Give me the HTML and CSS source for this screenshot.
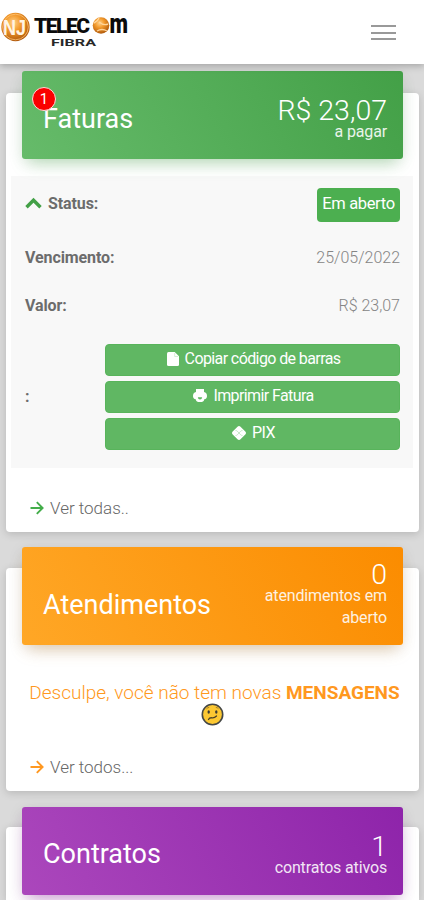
FILE: index.html
```html
<!DOCTYPE html>
<html lang="pt-BR">
<head>
<meta charset="utf-8">
<meta name="viewport" content="width=device-width, initial-scale=1">
<title>NJ Telecom Fibra</title>
<link rel="stylesheet" href="styles.css">
</head>
<body>
<header class="topbar">
  <svg class="logo" width="130" height="50" viewBox="0 0 130 50" role="img" aria-label="NJ Telecom Fibra">
    <defs>
      <radialGradient id="orb" cx=".42" cy=".35" r=".7">
        <stop offset="0" stop-color="#ffd08a"/>
        <stop offset=".4" stop-color="#f39a2c"/>
        <stop offset="1" stop-color="#a95208"/>
      </radialGradient>
    </defs>
    <circle cx="15.500" cy="27" r="14.200" fill="url(#orb)"/>
    <circle cx="15.500" cy="27" r="12.800" fill="none" stroke="#ffc477" stroke-width=".8"/>
    <text class="logo-mono" x="3" y="35" textLength="23" lengthAdjust="spacingAndGlyphs">NJ</text>
    <text class="logo-word" x="34" y="33" textLength="56" lengthAdjust="spacing">TELEC</text>
    <circle cx="101" cy="25.500" r="8.300" fill="url(#orb)"/>
    <path d="M94 23q4-2 5-5M99 22q5 4 9 2M97 31q5-3 10 0" fill="none" stroke="#ffd59b" stroke-width="1.400"/>
    <text class="logo-word logo-m" x="109.500" y="33" textLength="18.500" lengthAdjust="spacingAndGlyphs">m</text>
    <text class="logo-sub" x="51" y="46" textLength="45" lengthAdjust="spacingAndGlyphs">FIBRA</text>
  </svg>
  <button class="menu" aria-label="Menu"><span></span><span></span><span></span></button>
</header>
<main class="content">
  <section class="card invoices">
    <div class="banner green">
      <span class="badge">1</span>
      <h2 class="title">Faturas</h2>
      <div class="summary"><span class="figure">R$ 23,07</span><span class="caption">a pagar</span></div>
    </div>
    <div class="details">
      <div class="row status">
        <span class="label"><svg class="chevron" width="17" height="12" viewBox="0 0 17 12"><path d="M1.500 10.200l7-7 7 7" fill="none" stroke="#43a047" stroke-width="3.400"/></svg>Status:</span>
        <span class="tag">Em aberto</span>
      </div>
      <div class="row"><span class="label">Vencimento:</span><span class="value">25/05/2022</span></div>
      <div class="row"><span class="label">Valor:</span><span class="value">R$ 23,07</span></div>
      <div class="row actions">
        <span class="label">:</span>
        <div class="buttons">
          <button class="btn"><svg width="12" height="14" viewBox="0 0 12 14"><path d="M1.500 0h6.200L12 4.300v8.200q0 1.500-1.500 1.500h-9Q0 14 0 12.500v-11Q0 0 1.500 0z" fill="#fff"/><path d="M7.700 1v3.500h3.300" fill="none" stroke="#cbe8cc" stroke-width=".8"/></svg><span>Copiar código de barras</span></button>
          <button class="btn"><svg width="14" height="13" viewBox="0 0 14 13"><path d="M3 0h8v3q3 .5 3 4 0 3-2.700 3.300-.3 2.700-2.300 2.700H5q-2 0-2.300-2.700Q0 10 0 7q0-3.500 3-4z" fill="#fff"/><path d="M4.800 8.200h4.400q-.3 2.200-2.200 2.200T4.800 8.200z" fill="#5fb762"/></svg><span>Imprimir Fatura</span></button>
          <button class="btn"><svg width="14" height="14" viewBox="0 0 14 14"><path d="M7 0q.8 0 1.500.700l4.800 4.800q1.400 1.500 0 3L8.500 13.300q-1.500 1.400-3 0L.7 8.500q-1.400-1.500 0-3L5.500.7Q6.200 0 7 0z" fill="#fff"/><path d="M3.500 4.500q1.200 0 1.800.7L7 7l1.700-1.800q.6-.7 1.800-.7M3.500 9.500q1.200 0 1.800-.7L7 7l1.700 1.800q.6.700 1.800.7" fill="none" stroke="#a5d8a7" stroke-width=".6"/></svg><span>PIX</span></button>
        </div>
      </div>
    </div>
    <a class="more"><svg width="14" height="14" viewBox="0 0 14 14"><path d="M.5 7h12M6.800 1.200L12.600 7l-5.800 5.800" fill="none" stroke="#43ad4a" stroke-width="1.900"/></svg><span>Ver todas..</span></a>
  </section>

  <section class="card support">
    <div class="banner orange">
      <h2 class="title">Atendimentos</h2>
      <div class="summary"><span class="figure">0</span><span class="caption">atendimentos em<br>aberto</span></div>
    </div>
    <p class="message"><span>Desculpe, você não tem novas <b>MENSAGENS</b></span>
      <svg class="emoji" width="23" height="23" viewBox="0 0 23 23"><circle cx="11.500" cy="11.500" r="10.200" fill="#fcc832" stroke="#454745" stroke-width="1.600"/><ellipse cx="7.700" cy="9" rx="1.200" ry="1.800" fill="#3c3b32"/><ellipse cx="15.300" cy="9" rx="1.200" ry="1.800" fill="#3c3b32"/><path d="M5.500 5.800q1.200-1.300 2.700-1.400M14.800 4.400q1.600.1 2.700 1.400" stroke="#a47c25" fill="none"/><path d="M7.500 16.500q1-2 3.500-1.700t4.500-1.800" fill="none" stroke="#4c4328" stroke-width="1.300" stroke-linecap="round"/></svg>
    </p>
    <a class="more"><svg width="14" height="14" viewBox="0 0 14 14"><path d="M.5 7h12M6.800 1.200L12.600 7l-5.800 5.800" fill="none" stroke="#ff9820" stroke-width="1.900"/></svg><span>Ver todos...</span></a>
  </section>

  <section class="card contracts">
    <div class="banner purple">
      <h2 class="title">Contratos</h2>
      <div class="summary"><span class="figure">1</span><span class="caption">contratos ativos</span></div>
    </div>
  </section>
</main>
</body>
</html>
```

FILE: styles.css
```css
* { box-sizing: border-box; }
html, body { height: 100%; }
body {
  margin: 0;
  overflow: hidden;
  background: #dadada;
  font-family: Roboto, "Liberation Sans", sans-serif;
  font-weight: 300;
  font-size: 16px;
}
.topbar {
  position: relative;
  z-index: 2;
  display: flex;
  justify-content: space-between;
  height: 64px;
  background: #fff;
  box-shadow: 0 2px 7px rgba(0, 0, 0, .25);
}
.logo { display: block; }
.logo-mono { font: 700 22px "Liberation Sans", sans-serif; fill: #fff4e4; }
.logo-word { font: 900 21px Roboto, sans-serif; fill: #0b0b0b; }
.logo-m { font-size: 28px; }
.logo-sub { font: 700 9px Roboto, sans-serif; fill: #292929; }
.menu {
  display: flex;
  flex-direction: column;
  gap: 4.500px;
  width: 25px;
  margin: 25px 28px 0 0;
  padding: 0;
  border: 0;
  background: none;
}
.menu span { display: block; width: 25px; height: 2px; background: #999; }

.content { padding: 29px 5px 0 6px; }
.card {
  display: flex;
  flex-direction: column;
  background: #fff;
  border-radius: 4px;
  box-shadow: 0 2px 8px rgba(0, 0, 0, .16);
}
.invoices { height: 439px; }
.support { height: 223px; margin-top: 36px; }
.contracts { height: 73px; margin-top: 36px; border-radius: 4px 4px 0 0; }
.banner {
  position: relative;
  display: flex;
  justify-content: space-between;
  flex: none;
  height: 88px;
  margin: -22px 16px 0;
  padding: 0 16px 0 21px;
  border-radius: 3px;
  color: #fff;
}
.support .banner { height: 98px; margin-top: -21px; }
.contracts .banner { height: 88px; margin-top: -20px; }
.green { background: linear-gradient(60deg, #66bb6a, #43a047); box-shadow: 0 9px 16px -6px rgba(76, 175, 80, .4), 0 3px 16px rgba(0, 0, 0, .07); }
.orange { background: linear-gradient(60deg, #ffa726, #fb8c00); box-shadow: 0 9px 16px -6px rgba(190, 130, 50, .4), 0 3px 16px rgba(0, 0, 0, .08); }
.purple { background: linear-gradient(60deg, #ab47bc, #8e24aa); box-shadow: 0 9px 16px -6px rgba(156, 39, 176, .45), 0 3px 16px rgba(0, 0, 0, .08); }
.title { margin: 32px 0 0; font-size: 27px; line-height: 32px; font-weight: 400; }
.support .title { margin-top: 42px; }
.contracts .title { margin-top: 31px; }
.summary { display: flex; flex-direction: column; text-align: right; }
.figure { margin-top: 26px; font-size: 28.500px; line-height: 28px; }
.support .figure { margin-top: 14px; }
.contracts .figure { margin-top: 26px; }
.caption { font-size: 16px; line-height: 22px; letter-spacing: -.15px; margin-top: -4px; font-weight: 400; opacity: .88; }
.badge {
  position: absolute;
  left: 10px;
  top: 16px;
  width: 24px;
  height: 24px;
  border: 1px solid #ffd9d9;
  border-radius: 50%;
  background: #fa0000;
  font-size: 15px;
  line-height: 22px;
  font-weight: 400;
  text-align: center;
}

.details { height: 292px; margin: 17px 6px 0 5px; padding: 0 13px 0 14px; background: #f8f8f8; }
.row { display: flex; align-items: center; justify-content: space-between; height: 48px; }
.status { height: 57px; }
.label { color: #6c6c6c; font-size: 16px; font-weight: 700; letter-spacing: -.1px; }
.status .label { padding-bottom: 2px; }
.chevron { margin-right: 6px; }
.value { color: #858585; }
.tag { width: 83px; height: 34px; border-radius: 4px; background: #4caf50; color: #fff; font-size: 16.500px; line-height: 32px; font-weight: 400; letter-spacing: -.35px; text-align: center; white-space: nowrap; }
.actions { height: 135px; }
.buttons { display: flex; flex-direction: column; gap: 5px; width: 295px; }
.btn {
  display: flex;
  align-items: center;
  justify-content: center;
  gap: 6px;
  height: 32px;
  padding: 0 0 2px 2px;
  border: 1px solid #58b45b;
  border-radius: 4px;
  background: #60b763;
  color: #fff;
  font: 400 16px Roboto, sans-serif;
  letter-spacing: -.6px;
}
.more { display: flex; align-items: center; gap: 6px; height: 24px; margin: 28px 0 0 24px; color: #666; font-size: 17px; }
.message { display: flex; flex-direction: column; align-items: center; margin: 35px 0 0; color: #ff9820; font-size: 19px; line-height: 25px; white-space: nowrap; }
.message span { margin-left: 4px; }
.message b { font-weight: 700; }
.emoji { margin-top: -2px; }
.support .more { margin-top: 29px; }
```
